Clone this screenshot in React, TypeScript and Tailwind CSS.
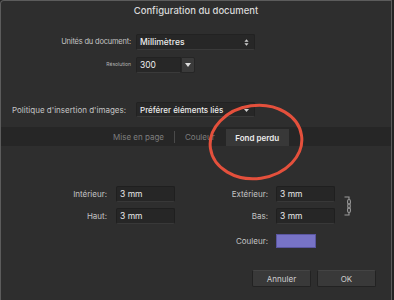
import React from 'react'

const font = { fontFamily: 'Inter, "Liberation Sans", sans-serif' }

function Field({ value, w = 'w-[59px]' }: { value: string; w?: string }) {
  return (
    <div className={`${w} h-[16px] flex items-center px-[3px] bg-[#262626] border border-[#1f1f1f] border-b-[#383838] rounded-[2px] text-[8.5px] text-[#e6e6e6]`}>
      {value}
    </div>
  )
}

function Stepper() {
  return (
    <svg width="5" height="9" viewBox="0 0 6 10" className="text-[#cfcfcf]">
      <path d="M3 1 L5.5 4 H0.5 Z M3 9 L5.5 6 H0.5 Z" fill="currentColor" />
    </svg>
  )
}

function ChainIcon() {
  return (
    <svg width="10" height="20" viewBox="0 0 10 20" fill="none" stroke="#9a9a9a" strokeWidth="1.1">
      <path d="M0.5 1 H5 V3.5" />
      <path d="M0.5 19 H5 V16.5" />
      <rect x="3.6" y="3.5" width="2.8" height="4.6" rx="1.4" />
      <rect x="3.8" y="7.7" width="2.4" height="4.6" rx="1.2" />
      <rect x="3.6" y="11.9" width="2.8" height="4.6" rx="1.4" />
    </svg>
  )
}

export default function App() {
  return (
    <div style={font} className="w-[394px] h-[300px] bg-[#232323] overflow-hidden">
      <div className="relative w-[392px] h-[300px] bg-[#2e2e2e] border-t border-l border-r border-[#5c5c5c] rounded-tl-[4px] flex flex-col">
        {/* Title */}
        <div className="h-[20px] flex items-center justify-center text-[9.5px] font-medium text-[#d9d9d9]">
          Configuration du document
        </div>

        {/* General settings */}
        <div className="mt-[13px] flex items-center">
          <div className="w-[130px] text-right text-[7.5px] text-[#c4c4c4] tracking-[-0.2px]">Unités du document:</div>
          <div className="ml-[5px] w-[119px] h-[16px] flex items-center justify-between pl-[3px] pr-[5px] bg-[#272727] border border-[#222] border-b-[#3a3a3a] rounded-[2px]">
            <span className="text-[8.5px] font-medium text-[#ececec]">Millimètres</span>
            <Stepper />
          </div>
        </div>
        <div className="mt-[7px] flex items-center">
          <div className="w-[130px] text-right text-[5px] text-[#b5b5b5]">Résolution</div>
          <div className="ml-[5px] flex h-[16px]">
            <div className="w-[45px] flex items-center pl-[3px] bg-[#272727] border border-[#222] border-b-[#3a3a3a] rounded-l-[2px] text-[8.5px] text-[#ececec]">300</div>
            <div className="w-[14px] flex items-center justify-center bg-[#3a3a3a] border border-[#262626] rounded-r-[2px]">
              <svg width="6" height="4" viewBox="0 0 6 4"><path d="M0 0 H6 L3 4 Z" fill="#dcdcdc" /></svg>
            </div>
          </div>
        </div>

        <div className="mt-[29px] flex items-center">
          <div className="w-[130px] pl-[11px] text-[8px] text-[#c4c4c4] whitespace-nowrap">Politique d'insertion d'images:</div>
          <div className="ml-[5px] w-[119px] h-[15px] flex items-center justify-between pl-[3px] pr-[5px] bg-[#272727] border border-[#222] border-b-[#3a3a3a] rounded-[2px]">
            <span className="text-[8px] font-medium text-[#ececec]">Préférer éléments liés</span>
            <svg width="5" height="3" viewBox="0 0 5 3" className="mt-[2px]"><path d="M0 0 H5 L2.5 3 Z" fill="#cfcfcf" /></svg>
          </div>
        </div>

        {/* Tabs */}
        <div className="mt-[10px] h-[19px] bg-[#262626] flex items-end">
          <div className="ml-[111px] w-[53px] h-[19px] flex items-center justify-center text-[8px] text-[#7e7e7e]">Mise en page</div>
          <div className="ml-[9px] mb-[3px] w-px h-[12px] bg-[#4a4a4a]" />
          <div className="ml-[10px] h-[19px] flex items-center text-[8px] text-[#7e7e7e]">Couleur</div>
          <div className="ml-[11px] w-[63px] h-[17px] flex items-center justify-center bg-[#383838] text-[8px] font-semibold text-[#ededed]">Fond perdu</div>
        </div>

        {/* Bleed fields */}
        <div className="mt-[40px] flex">
          <div className="flex flex-col gap-[6px]">
            <div className="flex items-center">
              <div className="w-[106px] text-right text-[8px] text-[#c4c4c4]">Intérieur:</div>
              <div className="ml-[9px]"><Field value="3 mm" /></div>
            </div>
            <div className="flex items-center">
              <div className="w-[106px] text-right text-[8px] text-[#c4c4c4]">Haut:</div>
              <div className="ml-[9px]"><Field value="3 mm" /></div>
            </div>
          </div>
          <div className="flex flex-col gap-[6px]">
            <div className="flex items-center">
              <div className="w-[93px] text-right text-[8px] text-[#c4c4c4]">Extérieur:</div>
              <div className="ml-[8px]"><Field value="3 mm" /></div>
            </div>
            <div className="flex items-center">
              <div className="w-[93px] text-right text-[8px] text-[#c4c4c4]">Bas:</div>
              <div className="ml-[8px]"><Field value="3 mm" /></div>
            </div>
            <div className="mt-[4px] flex items-center">
              <div className="w-[93px] text-right text-[8px] text-[#c4c4c4]">Couleur:</div>
              <div className="ml-[8px] w-[40px] h-[14px] bg-[#7773c6] border border-[#5a56a0]" />
            </div>
          </div>
          <div className="ml-[9px] mt-[10px]"><ChainIcon /></div>
        </div>

        {/* Buttons */}
        <div className="mt-[22px] flex justify-end gap-[6px] pr-[15px]">
          <button className="w-[59px] h-[17px] flex items-center justify-center bg-[#393939] border border-[#222] border-t-[#444] rounded-[2px] text-[8px] text-[#d0d0d0]">Annuler</button>
          <button className="w-[59px] h-[17px] flex items-center justify-center bg-[#393939] border border-[#222] border-t-[#444] rounded-[2px] text-[8px] text-[#d0d0d0]">OK</button>
        </div>

        {/* Red annotation circle */}
        <svg className="absolute left-[205px] top-[101px] pointer-events-none" width="100" height="80" viewBox="0 0 100 80">
          <ellipse cx="50" cy="40" rx="46" ry="36.5" fill="none" stroke="#e4503c" strokeWidth="3" transform="rotate(-8 50 40)" />
        </svg>
      </div>
    </div>
  )
}
